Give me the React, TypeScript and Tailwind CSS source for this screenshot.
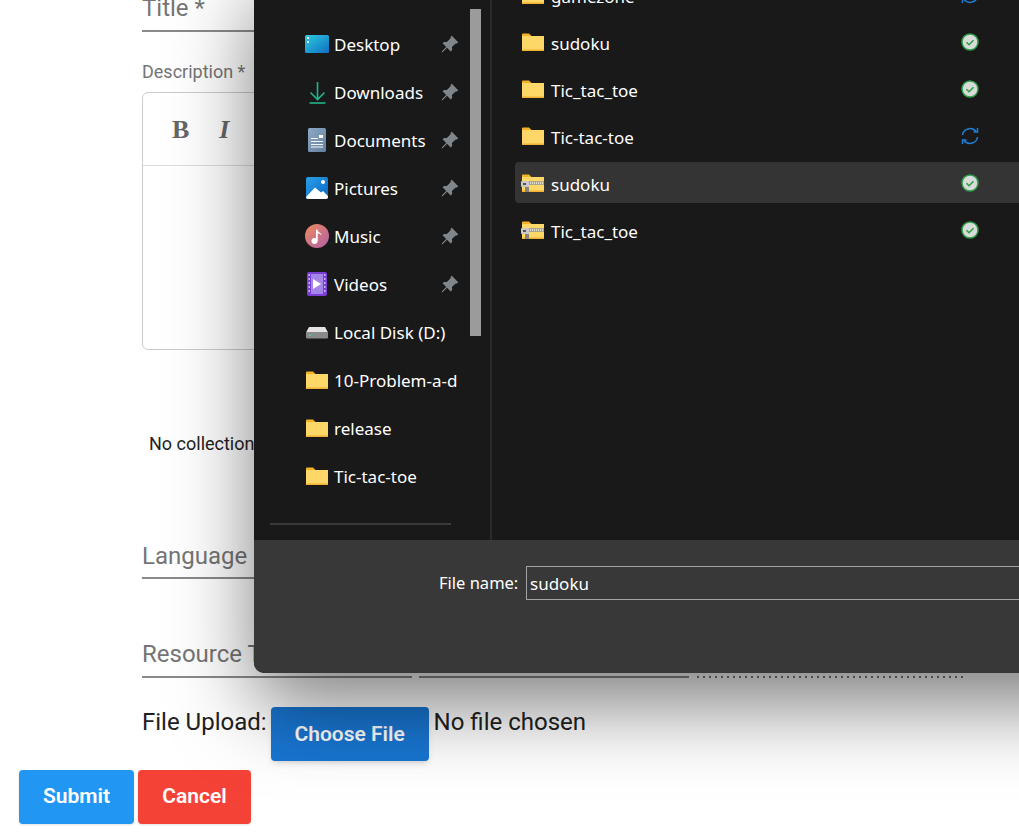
import { BsPinAngleFill } from 'react-icons/bs';

// form behind the file picker, plus the picker window itself

const dialogFont = "[font-family:'Noto_Sans','Open_Sans',sans-serif]";

function Folder({ zip = false }: { zip?: boolean }) {
  return (
    <svg width="24" height="20" viewBox="0 0 24 20" className="shrink-0">
      <path d="M1 2.5a1 1 0 0 1 1-1h6l2.500 2.500H1z" fill="#f5b324" />
      <rect x="1" y="4" width="22" height="15" fill="#fdd768" />
      <rect x="1" y="17.500" width="22" height="1.500" fill="#f0b232" />
      {zip && (
        <>
          <rect x="1" y="8" width="22" height="4" fill="#a9a38f" />
          <path d="M7 10h16" stroke="#f4f0df" strokeWidth="1.500" strokeDasharray="1 1" />
          <rect x="0" y="8" width="8" height="6" rx="1" fill="#c9c9c9" />
          <rect x="2" y="10" width="3" height="2" fill="#555" />
          <rect x="4" y="14" width="4" height="5" fill="#8a8378" />
        </>
      )}
    </svg>
  );
}

function Synced() {
  return (
    <svg width="18" height="18" viewBox="0 0 18 18" className="shrink-0">
      <circle cx="9" cy="9" r="8" fill="#d8dcd8" stroke="#2e9e48" strokeWidth="1.500" />
      <path d="M5.500 9.200l2.500 2.500 4.500-4.500" fill="none" stroke="#2e9e48" strokeWidth="1.600" />
    </svg>
  );
}

function Syncing() {
  return (
    <svg width="18" height="18" viewBox="0 0 18 18" className="shrink-0" fill="none" stroke="#1f7fd6" strokeWidth="1.500">
      <path d="M1.500 8a7.500 7 0 0 1 13.500-3.500" />
      <path d="M16.500 1v4h-4" />
      <path d="M16.500 10a7.500 7 0 0 1-13.500 3.500" />
      <path d="M1.500 17v-4h4" />
    </svg>
  );
}

function DesktopIcon() {
  return (
    <svg width="26" height="24" viewBox="0 0 26 24">
      <defs>
        <linearGradient id="dk" x1="0" y1="0" x2="1" y2="1">
          <stop offset="0" stopColor="#2ecbe0" />
          <stop offset="1" stopColor="#0f6fc2" />
        </linearGradient>
      </defs>
      <rect x="1" y="3" width="24" height="18" rx="1.500" fill="url(#dk)" />
      <rect x="3" y="5" width="2" height="2" fill="#e6fbff" />
      <rect x="3" y="9" width="2" height="2" fill="#e6fbff" />
    </svg>
  );
}

function DownloadIcon() {
  return (
    <svg width="26" height="24" viewBox="0 0 26 24" fill="none" stroke="#1fb58c" strokeWidth="1.600">
      <path d="M13.500 2v17M6.500 12.500l7 7 7-7" />
      <path d="M5.500 23h16" />
    </svg>
  );
}

function DocumentIcon() {
  return (
    <svg width="26" height="24" viewBox="0 0 26 24">
      <defs>
        <linearGradient id="dc" x1="0" y1="0" x2="1" y2="1">
          <stop offset="0" stopColor="#8ea9c6" />
          <stop offset="1" stopColor="#64809d" />
        </linearGradient>
      </defs>
      <rect x="4" y="0" width="18" height="24" rx="1.500" fill="url(#dc)" />
      <rect x="15" y="7" width="4" height="3" fill="#fff" />
      <path d="M7 10.500h7M7 13.500h12M7 16.500h12M7 19h12" stroke="#f2f6fa" strokeWidth="1" />
    </svg>
  );
}

function PictureIcon() {
  return (
    <svg width="26" height="24" viewBox="0 0 26 24">
      <defs>
        <linearGradient id="pc" x1="0" y1="0" x2="1" y2="1">
          <stop offset="0" stopColor="#2aa0e8" />
          <stop offset="1" stopColor="#0a66c4" />
        </linearGradient>
      </defs>
      <rect x="2" y="1" width="22" height="22" rx="2" fill="url(#pc)" />
      <circle cx="19" cy="6" r="2" fill="#fff" />
      <path d="M2 21l9-9.500 6 5 2-1.500 5 5v1a2 2 0 0 1-2 2H4a2 2 0 0 1-2-2z" fill="#fff" />
    </svg>
  );
}

function MusicIcon() {
  return (
    <svg width="26" height="24" viewBox="0 0 26 24">
      <defs>
        <linearGradient id="ms" x1="0" y1="0" x2="1" y2="1">
          <stop offset="0" stopColor="#f08a5a" />
          <stop offset="1" stopColor="#b05fa8" />
        </linearGradient>
      </defs>
      <circle cx="13" cy="12" r="12" fill="url(#ms)" />
      <circle cx="10.500" cy="17" r="3" fill="#fff" />
      <path d="M12 17V5.500h1.500c0 3 4 3 4 6-1-1.500-2.500-2-3.800-2V17z" fill="#fff" />
    </svg>
  );
}

function VideoIcon() {
  return (
    <svg width="26" height="24" viewBox="0 0 26 24">
      <rect x="3" y="0" width="20" height="24" rx="2" fill="#7a3fd6" />
      <rect x="7" y="2" width="12" height="20" fill="#a685e8" />
      <path d="M4.500 3h1.500M4.500 7h1.500M4.500 11h1.500M4.500 15h1.500M4.500 19h1.500M20 3h1.500M20 7h1.500M20 11h1.500M20 15h1.500M20 19h1.500" stroke="#e5dcf8" strokeWidth="1.500" />
      <path d="M9 7l8 5-8 5z" fill="#fff" />
    </svg>
  );
}

function DiskIcon() {
  return (
    <svg width="26" height="24" viewBox="0 0 26 24">
      <path d="M5 7h16l3 5.500H2z" fill="#e3e3e3" />
      <rect x="2" y="12" width="22" height="6.500" rx="1" fill="#8a8a8a" />
      <rect x="5" y="14.500" width="2" height="1.500" fill="#3fd98a" />
    </svg>
  );
}

const places = [
  { name: 'Desktop', icon: <DesktopIcon />, pin: true },
  { name: 'Downloads', icon: <DownloadIcon />, pin: true },
  { name: 'Documents', icon: <DocumentIcon />, pin: true },
  { name: 'Pictures', icon: <PictureIcon />, pin: true },
  { name: 'Music', icon: <MusicIcon />, pin: true },
  { name: 'Videos', icon: <VideoIcon />, pin: true },
  { name: 'Local Disk (D:)', icon: <DiskIcon />, pin: false },
  { name: '10-Problem-a-d', icon: <Folder />, pin: false },
  { name: 'release', icon: <Folder />, pin: false },
  { name: 'Tic-tac-toe', icon: <Folder />, pin: false },
];

const files = [
  { name: 'gamezone', zip: false, synced: false },
  { name: 'sudoku', zip: false, synced: true },
  { name: 'Tic_tac_toe', zip: false, synced: true },
  { name: 'Tic-tac-toe', zip: false, synced: false },
  { name: 'sudoku', zip: true, synced: true, selected: true },
  { name: 'Tic_tac_toe', zip: true, synced: true },
];

function FilePicker() {
  return (
    <div
      className={`absolute left-[254px] top-[-30px] flex h-[703px] w-[900px] flex-col overflow-hidden rounded-b-[10px] bg-[#191919] text-[17px] text-white ${dialogFont}`}
    >
      <div className="flex h-[570px]">
        <div className="relative w-[238px] shrink-0 border-r-2 border-[#2a2a2a] pt-[50px]">
          {places.map(p => (
            <div key={p.name} className="ml-[50px] flex h-[48px] w-[158px] items-center overflow-hidden whitespace-nowrap">
              <div className="flex w-[26px] shrink-0 items-center justify-center">{p.icon}</div>
              <span className="ml-[4px] pt-[1px]">{p.name}</span>
              {p.pin && <BsPinAngleFill className="ml-auto mr-[3px] shrink-0 text-[#7f868c]" size={19} />}
            </div>
          ))}
          <div className="ml-[16px] mt-[23px] h-[2px] w-[181px] bg-[#3a3a3a]" />
          {/* scrollbar thumb */}
          <div className="absolute left-[216px] top-[39px] h-[327px] w-[11px] bg-[#9b9b9b]" />
        </div>
        <div className="flex-1 pl-[23px] pt-[4px]">
          {files.map((f, i) => (
            <div
              key={i}
              className={`mb-[6px] flex h-[41px] items-center rounded-sm pl-[6px] ${f.selected ? 'bg-[#343434]' : ''}`}
            >
              <div className="w-[24px] shrink-0"><Folder zip={f.zip} /></div>
              <span className="ml-[6px] w-[410px] pt-[4px]">{f.name}</span>
              {f.synced ? <Synced /> : <Syncing />}
            </div>
          ))}
        </div>
      </div>
      <div className="h-[133px] bg-[#383838]">
        <div className="flex items-start pl-[185px] pt-[26px]">
          <span className="w-[87px] pt-[5px] text-[16.500px]">File name:</span>
          <div className="h-[34px] flex-1 border border-r-0 border-[#a3a3a3] pl-[3px] text-[17px] leading-[34px]">sudoku</div>
        </div>
      </div>
    </div>
  );
}

export default function App() {
  return (
    <div className="relative h-[836px] w-[1019px] overflow-hidden bg-white [font-family:Roboto,sans-serif]">
      <div className="ml-[142px] mt-[-8px] w-[270px] border-b-2 border-[#8a8a8a] pb-[6px] text-2xl leading-8 text-[#757575]">Title *</div>
      <div className="ml-[142px] mt-[28px] text-lg leading-6 text-[#757575]">Description *</div>
      <div className="ml-[142px] mt-[8px] h-[258px] w-[550px] rounded-md border border-[#cccccc]">
        <div className="flex h-[73px] items-center gap-[30px] border-b border-[#dddddd] pl-[29px] text-[26px] text-[#666666] [font-family:'Liberation_Serif',serif]">
          <b>B</b>
          <i className="font-bold">I</i>
        </div>
      </div>
      <div className="ml-[149px] mt-[82px] text-lg leading-6 text-[#222222]">No collection</div>
      <div className="ml-[142px] mt-[84px] w-[270px] border-b-2 border-[#8a8a8a] pb-[5px] text-2xl leading-8 text-[#757575]">Language</div>
      <div className="ml-[142px] mt-[59px] flex w-[821px] gap-[7px]">
        <div className="w-[270px] border-b-2 border-[#8a8a8a] pb-[6px] text-2xl leading-8 text-[#757575]">Resource Type</div>
        <div className="mt-[38px] h-[2px] w-[270px] bg-[#8a8a8a]" />
        <div className="ml-px mt-[38px] h-[2px] flex-1 bg-[repeating-linear-gradient(90deg,#777777_0,#777777_2px,transparent_2px,transparent_6px)]" />
      </div>
      <div className="ml-[142px] mt-[28px] flex items-start text-2xl leading-8 text-[#212121]">
        <span>File Upload:</span>
        <button className="ml-[4px] mt-px h-[54px] w-[158px] rounded-[4px] bg-[#1976d2] text-[21px] font-semibold text-white shadow-md">Choose File</button>
        <span className="ml-[5px]">No file chosen</span>
      </div>
      <div className="ml-[19px] mt-[9px] flex gap-1">
        <button className="h-[54px] w-[115px] rounded-[4px] bg-[#2196f3] text-[21px] font-semibold text-white shadow-sm">Submit</button>
        <button className="h-[54px] w-[113px] rounded-[4px] bg-[#f44336] text-[21px] font-semibold text-white shadow-sm">Cancel</button>
      </div>
      <div className="pointer-events-none absolute left-[254px] top-[-30px] h-[703px] w-[900px] rounded-b-[10px] shadow-[0_32px_80px_rgba(0,0,0,0.5)]" />
      <FilePicker />
    </div>
  );
}
